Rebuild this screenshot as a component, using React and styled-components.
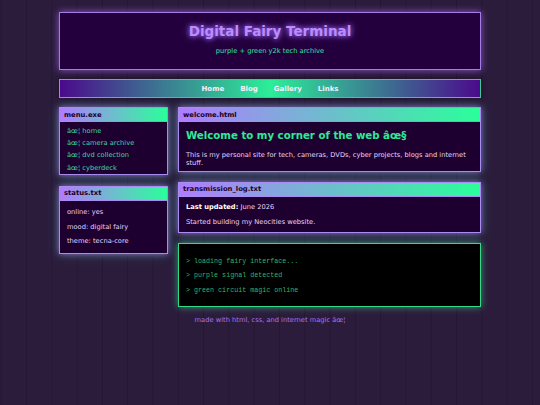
import styled, { createGlobalStyle } from 'styled-components'

const GlobalStyle = createGlobalStyle`
    html, body {
        margin: 0;
        padding: 0;
    }
    body {
        min-height: 100vh;
        background-color: #2c1c3c;
        background-image: linear-gradient(90deg, rgba(20, 8, 32, 0.28) 1px, transparent 1px);
        background-size: 25.3px 100%;
        background-position: 0.7px 0;
        font-family: 'DejaVu Sans', Verdana, sans-serif;
    }
`

const menuItems = ['home', 'camera archive', 'dvd collection', 'cyberdeck']
const statusLines = ['online: yes', 'mood: digital fairy', 'theme: tecna-core']
const navLinks = ['Home', 'Blog', 'Gallery', 'Links']
const logLines = [
    '> loading fairy interface...',
    '> purple signal detected',
    '> green circuit magic online',
]

const App = () => {
    return (
        <>
            <GlobalStyle />
            <Page>
                <Header>
                    <Title>Digital Fairy Terminal</Title>
                    <Tagline>purple + green y2k tech archive</Tagline>
                </Header>

                <Nav>
                    {navLinks.map(link => (
                        <NavLink key={link} href='#'>{link}</NavLink>
                    ))}
                </Nav>

                <Columns>
                    <Sidebar>
                        <Window>
                            <TitleBar>menu.exe</TitleBar>
                            <MenuList>
                                {menuItems.map(item => (
                                    <li key={item}>âœ¦ {item}</li>
                                ))}
                            </MenuList>
                        </Window>
                        <Window>
                            <TitleBar>status.txt</TitleBar>
                            <WindowBody>
                                {statusLines.map(line => (
                                    <StatusLine key={line}>{line}</StatusLine>
                                ))}
                            </WindowBody>
                        </Window>
                    </Sidebar>

                    <Main>
                        <Window>
                            <TitleBar>welcome.html</TitleBar>
                            <WindowBody $pad='7px 7px 4px'>
                                <Heading>Welcome to my corner of the web âœ§</Heading>
                                <Text>
                                    This is my personal site for tech, cameras, DVDs, cyber projects, blogs and internet stuff.
                                </Text>
                            </WindowBody>
                        </Window>
                        <Window>
                            <TitleBar>transmission_log.txt</TitleBar>
                            <WindowBody $pad='0 7px'>
                                <LogText><b>Last updated:</b> June 2026</LogText>
                                <LogText>Started building my Neocities website.</LogText>
                            </WindowBody>
                        </Window>
                        <Terminal>
                            {logLines.map(line => (
                                <TermLine key={line}>{line}</TermLine>
                            ))}
                        </Terminal>
                    </Main>
                </Columns>

                <Footer>made with html, css, and internet magic âœ¦</Footer>
            </Page>
        </>
    )
}

const Page = styled.div`
    width: 422px;
    margin: 12px auto 0;
    display: flex;
    flex-direction: column;
`
const Header = styled.header`
    background: #23003d;
    border: 1px solid #a57be6;
    box-shadow: 0 0 7px rgba(170, 110, 255, 0.75);
    padding: 10px 10px 14px;
    text-align: center;
`
const Title = styled.h1`
    margin: 0 0 8px;
    font-size: 13.5px;
    line-height: 16px;
    font-weight: bold;
    color: #b98cff;
    text-shadow: 0 0 5px #a66bff, 0 0 9px rgba(170, 110, 255, 0.7);
`
const Tagline = styled.p`
    margin: 0;
    font-size: 6.7px;
    line-height: 8px;
    color: #33e0a0;
`
const Nav = styled.nav`
    margin-top: 9px;
    height: 17px;
    display: flex;
    justify-content: center;
    align-items: center;
    gap: 16px;
    background: linear-gradient(90deg, #4b0a8c 0%, #2cee98 50%, #4b0a8c 100%);
    border: 1px solid #3bc99a;
    box-shadow: 0 0 6px rgba(20, 10, 30, 0.6);
`
const NavLink = styled.a`
    color: #f4f0ff;
    font-size: 7px;
    font-weight: bold;
    text-decoration: none;
`
const Columns = styled.div`
    margin-top: 9px;
    display: grid;
    grid-template-columns: 109px 1fr;
    gap: 10px;
    align-items: start;
`
const Sidebar = styled.aside`
    display: flex;
    flex-direction: column;
    gap: 11px;
`
const Main = styled.main`
    display: flex;
    flex-direction: column;
    gap: 10px;
`
const Window = styled.section`
    background: #1d002f;
    border: 1px solid #a88cf0;
    box-shadow: 0 0 6px rgba(176, 124, 255, 0.7), 0 0 12px rgba(42, 230, 160, 0.3);
`
const TitleBar = styled.div`
    height: 13px;
    padding: 0 4px;
    display: flex;
    align-items: center;
    background: linear-gradient(90deg, #b07cff, #2aff9a);
    border-bottom: 1px solid #a88cf0;
    color: #1a0028;
    font-size: 6.8px;
    font-weight: bold;
`
const WindowBody = styled.div`
    padding: ${p => p.$pad || '1px 7px'};
`
const MenuList = styled.ul`
    list-style: none;
    margin: 0;
    padding: 5px 7px 2px;
    display: flex;
    flex-direction: column;
    gap: 4.2px;

    li {
        font-size: 6.7px;
        line-height: 8px;
        color: #3fd6a6;
    }
`
const StatusLine = styled.p`
    margin: 6.5px 0;
    font-size: 6.7px;
    line-height: 8px;
    color: #e6d2f6;
`
const Heading = styled.h2`
    margin: 0 0 7.5px;
    font-size: 10.2px;
    line-height: 14px;
    font-weight: bold;
    color: #2eea9a;
`
const Text = styled.p`
    margin: 0;
    font-size: 6.7px;
    line-height: 8px;
    color: #e6d6fa;
`
const LogText = styled.p`
    margin: 6.5px 0;
    font-size: 6.7px;
    line-height: 8px;
    color: #e6d6fa;

    b {
        color: #ffffff;
    }
`
const Terminal = styled.section`
    background: #000;
    border: 1px solid #36d98a;
    box-shadow: 0 0 7px rgba(54, 217, 138, 0.7);
    padding: 6px 7px;
`
const TermLine = styled.p`
    margin: 6.5px 0;
    font-family: 'Liberation Mono', 'Courier New', monospace;
    font-size: 6.7px;
    line-height: 8px;
    color: #2fb56e;
`
const Footer = styled.footer`
    margin-top: 9px;
    text-align: center;
    font-size: 6.7px;
    line-height: 8px;
    color: #a873f0;
`

export default App
